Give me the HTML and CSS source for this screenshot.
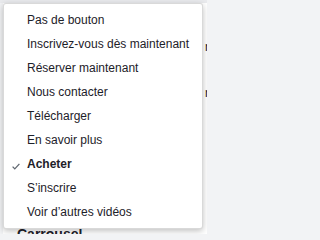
FILE: index.html
```html
<!DOCTYPE html>
<html>
<head>
<meta charset="utf-8">
<link rel="stylesheet" href="styles.css">
</head>
<body>
<div class="page">
  <div class="topbar"></div>
  <div class="content">
    <p class="bgline l1">r</p>
    <p class="bgline l2">r</p>
    <h3 class="heading">Carrousel</h3>
  </div>
</div>
<ul class="menu">
  <li class="item">Pas de bouton</li>
  <li class="item">Inscrivez-vous dès maintenant</li>
  <li class="item">Réserver maintenant</li>
  <li class="item">Nous contacter</li>
  <li class="item">Télécharger</li>
  <li class="item">En savoir plus</li>
  <li class="item selected"><svg class="check" width="8" height="7" viewBox="0 0 8 7"><polyline points="0.6,3.6 2.8,5.9 7.4,0.9" fill="none" stroke="#606770" stroke-width="1.3"/></svg>Acheter</li>
  <li class="item">S’inscrire</li>
  <li class="item">Voir d’autres vidéos</li>
</ul>
</body>
</html>
```
FILE: styles.css
```css
html, body {
  margin: 0;
  padding: 0;
}
body {
  width: 207px;
  height: 234px;
  overflow: hidden;
  background: #f2f3f5;
  font-family: "Liberation Sans", Arial, sans-serif;
  position: relative;
}
.page {
  height: 234px;
}
.topbar {
  height: 3px;
  background: #e9eaed;
}
.content {
  margin-left: 3px;
  background: #ffffff;
  height: 231px;
  padding-top: 36px;
  box-sizing: border-box;
  color: #1d2129;
  font-size: 12px;
}
.bgline {
  margin: 0;
  padding-left: 202px;
  line-height: 16px;
}
.l1 { margin-bottom: 30px; }
.heading {
  margin: 0;
  position: absolute;
  left: 17px;
  top: 226px;
  font-size: 14px;
  font-weight: bold;
  color: #1d2129;
}
.menu {
  position: absolute;
  left: 3px;
  top: 3px;
  width: 200px;
  box-sizing: border-box;
  margin: 0;
  padding: 4px 0;
  list-style: none;
  background: #ffffff;
  border: 1px solid rgba(0, 0, 0, 0.15);
  border-radius: 3px;
  box-shadow: 0 2px 6px rgba(0, 0, 0, 0.25);
  z-index: 2;
}
.item {
  position: relative;
  height: 24px;
  line-height: 24px;
  padding-left: 23px;
  font-size: 12px;
  color: #1d2129;
  white-space: nowrap;
}
.selected {
  font-weight: bold;
}
.check {
  position: absolute;
  left: 8px;
  top: 11px;
}
```
